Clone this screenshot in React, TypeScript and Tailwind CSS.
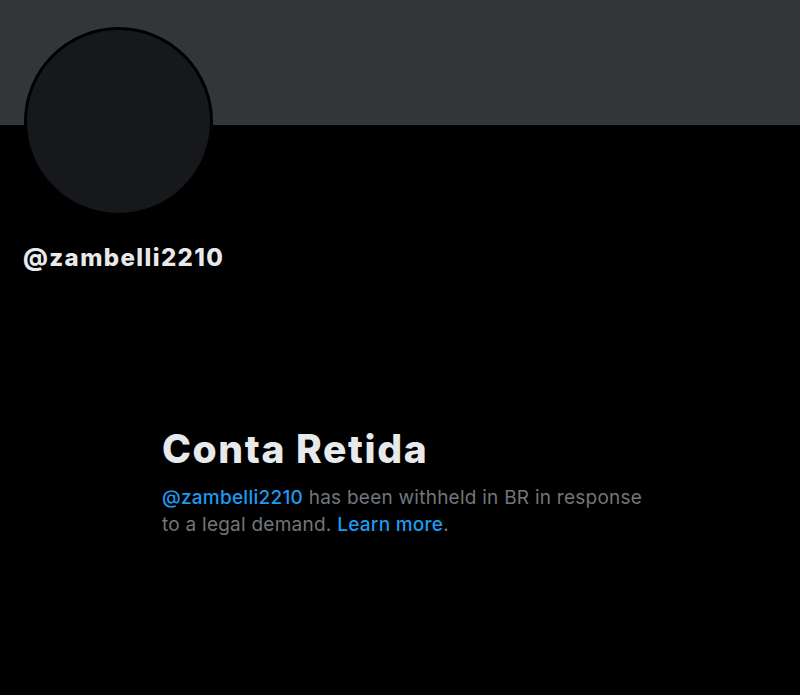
export default function App() {
  return (
    <main className="min-h-[695px] w-[800px] bg-black font-['Inter','Liberation_Sans',sans-serif]">
      <div className="h-[125px] bg-[#333639]" />
      <div className="ml-[24px] -mt-[98px] h-[189px] w-[189px] rounded-full border-[3px] border-black bg-[#16181c]" />
      <div className="ml-[23px] mt-[27px] text-[24px] font-extrabold leading-[30px] tracking-[1.4px] text-[#e7e9ea]">
        @zambelli2210
      </div>
      <section className="ml-[162px] mt-[153px] w-[520px]">
        <h1 className="text-[39px] font-extrabold leading-[46px] tracking-[1.6px] text-[#e7e9ea]">
          Conta Retida
        </h1>
        <p className="mt-[12px] text-[19px] leading-[27px] tracking-[0.25px] text-[#71767b]">
          <span className="font-medium text-[#1d9bf0]">@zambelli2210</span> has been withheld in BR in response
          <br />
          to a legal demand. <span className="font-medium text-[#1d9bf0]">Learn more</span>.
        </p>
      </section>
    </main>
  );
}
